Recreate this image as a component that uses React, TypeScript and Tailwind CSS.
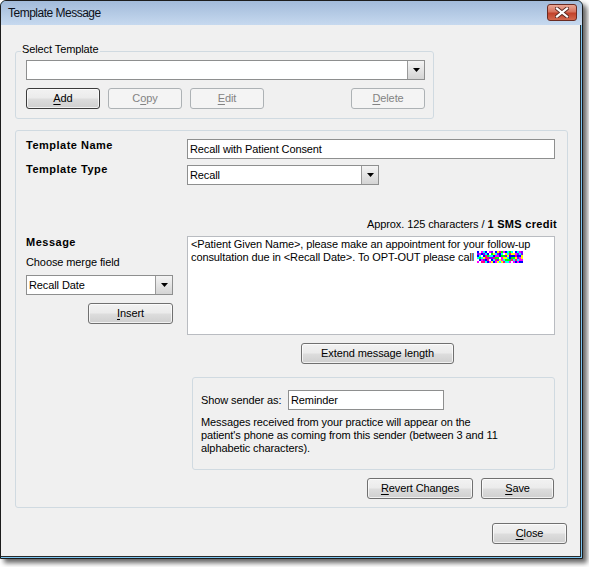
import type { ReactNode } from 'react';

const ui = "font-['Liberation_Sans',Arial,sans-serif] text-[11px] tracking-[-0.1px] text-black";

// pixel noise covering the practice phone number
function NumberMask() {
    const colors = ['#ff00ff', '#00ffff', '#ffff00', '#0000ff', '#ffffff', '#00ff00', '#ff0080', '#8000ff'];
    let seed = 7;
    const rand = () => {
        seed = (seed * 9301 + 49297) % 233280;
        return seed / 233280;
    };
    const cells: ReactNode[] = [];
    for (let y = 0; y < 6; y++) {
        for (let x = 0; x < 23; x++) {
            cells.push(
                <rect key={`${x}-${y}`} x={x * 2} y={y * 2} width={2} height={2} fill={colors[Math.floor(rand() * colors.length)]} />
            );
        }
    }
    return (
        <svg width="46" height="12" viewBox="0 0 46 12" className="inline-block align-[-2px]">
            {cells}
        </svg>
    );
}

function DropArrow() {
    return (
        <div className="w-[17px] h-full border-l border-[#9a9a9a] bg-gradient-to-b from-[#f4f4f4] to-[#d4d4d4] flex items-center justify-center">
            <svg width="7" height="4" viewBox="0 0 7 4">
                <path d="M0 0h7L3.5 4z" fill="#000" />
            </svg>
        </div>
    );
}

function Combo({ width, value }: { width: string; value?: string }) {
    return (
        <div className={`${width} h-[20px] border border-[#8e8f8f] bg-white flex items-stretch`}>
            <div className="flex-1 pl-[2px] leading-[18px] whitespace-nowrap overflow-hidden">{value}</div>
            <DropArrow />
        </div>
    );
}

function Btn({ children, width, disabled, primary }: { children: ReactNode; width: string; disabled?: boolean; primary?: boolean }) {
    if (disabled) {
        return (
            <div className={`${width} h-[21px] rounded-[3px] border border-[#adb2b5] bg-[#f4f4f4] text-[#838383] flex items-center justify-center`}>
                {children}
            </div>
        );
    }
    return (
        <div
            className={`${width} h-[21px] rounded-[3px] border ${primary ? 'border-[#3c3c3c]' : 'border-[#707070]'} bg-[linear-gradient(#f2f2f2_0%,#ebebeb_48%,#dddddd_52%,#cfcfcf_100%)] shadow-[inset_0_0_0_1px_rgba(255,255,255,0.7)] flex items-center justify-center`}
        >
            {children}
        </div>
    );
}

const U = ({ c }: { c: string }) => <span className="underline underline-offset-[2px]">{c}</span>;

export default function App() {
    return (
        <div className={`w-[589px] h-[567px] bg-white ${ui}`}>
            <div className="w-[583px] h-[559px] border border-[#1c1c1c] rounded-t-[6px] bg-[#7cc6f2] pr-[1px] pb-[1px] flex flex-col shadow-[4px_4px_5px_rgba(0,0,0,0.6)] overflow-hidden">
                {/* title bar */}
                <div className="h-[24px] -mr-[1px] bg-gradient-to-b from-[#a2bbda] to-[#c6d9ef] flex items-center pl-[7px] pr-[5px] rounded-t-[5px]">
                    <span className="text-[12px] tracking-[-0.5px] text-[#0c1018]">Template Message</span>
                    <div className="ml-auto mt-[-2px] w-[30px] h-[17px] rounded-[3px] border border-[#6a2b22] bg-[linear-gradient(#eaa795_0%,#d6735f_45%,#c2422b_55%,#d2684e_100%)] flex items-center justify-center">
                        <svg width="14" height="11" viewBox="0 0 14 11">
                            <path d="M2 1.5 12 9.5M12 1.5 2 9.5" stroke="#5a2a22" strokeWidth="4" strokeLinecap="square" />
                            <path d="M2 1.5 12 9.5M12 1.5 2 9.5" stroke="#ffffff" strokeWidth="2.2" strokeLinecap="square" />
                        </svg>
                    </div>
                </div>

                {/* dialog body */}
                <div className="flex-1 bg-[#f0f0f0] border-r border-b border-[#2a2a2a] flex flex-col pl-[14px]">
                    {/* Select Template group */}
                    <div className="relative mt-[26px] w-[419px] h-[68px] border border-[#d0dae1] rounded-[3px] pl-[10px] pt-[8px]">
                        <span className="absolute left-[5px] -top-[9px] px-[1px] bg-[#f0f0f0] leading-[13px]">Select Template</span>
                        <Combo width="w-[399px]" />
                        <div className="mt-[8px] flex gap-[8px] w-[399px]">
                            <Btn width="w-[74px]" primary>
                                <U c="A" />dd
                            </Btn>
                            <Btn width="w-[74px]" disabled>
                                C<U c="o" />py
                            </Btn>
                            <Btn width="w-[74px]" disabled>
                                <U c="E" />dit
                            </Btn>
                            <div className="ml-auto">
                                <Btn width="w-[74px]" disabled>
                                    <U c="D" />elete
                                </Btn>
                            </div>
                        </div>
                    </div>

                    {/* Template details group */}
                    <div className="mt-[11px] w-[553px] h-[378px] border border-[#d0dae1] rounded-[3px] pl-[10px] pt-[8px] flex flex-col">
                        <div className="flex">
                            <div className="w-[161px] font-bold tracking-[0.5px] leading-[13px]">Template Name</div>
                            <div className="w-[368px] h-[20px] border border-[#8e8f8f] bg-white pl-[2px] leading-[18px]">Recall with Patient Consent</div>
                        </div>
                        <div className="flex mt-[6px]">
                            <div className="w-[161px] font-bold tracking-[0.5px] leading-[13px] -mt-[2px]">Template Type</div>
                            <Combo width="w-[192px]" value="Recall" />
                        </div>

                        <div className="mt-[33px] w-[531px] text-right leading-[13px]">
                            Approx. 125 characters / <span className="font-bold tracking-[0.3px]">1 SMS credit</span>
                        </div>

                        <div className="flex mt-[5px]">
                            <div className="w-[161px] flex flex-col">
                                <div className="font-bold tracking-[0.5px] leading-[13px]">Message</div>
                                <div className="mt-[7px] leading-[13px]">Choose merge field</div>
                                <div className="mt-[6px]">
                                    <Combo width="w-[147px]" value="Recall Date" />
                                </div>
                                <div className="mt-[8px] w-[147px] flex justify-end">
                                    <Btn width="w-[85px]">
                                        <U c="I" />nsert
                                    </Btn>
                                </div>
                            </div>
                            <div className="w-[368px] h-[99px] border border-[#b9bcc1] bg-white px-[3px] pt-[1px] leading-[13px] whitespace-nowrap">
                                &lt;Patient Given Name&gt;, please make an appointment for your follow-up
                                <br />
                                consultation due in &lt;Recall Date&gt;. To OPT-OUT please call <NumberMask />
                            </div>
                        </div>

                        <div className="mt-[8px] ml-[275px]">
                            <Btn width="w-[153px]">Extend message length</Btn>
                        </div>

                        {/* sender group */}
                        <div className="mt-[13px] ml-[166px] w-[363px] h-[93px] border border-[#d0dae1] rounded-[3px] pl-[8px] pt-[12px]">
                            <div className="flex items-center">
                                <span className="w-[87px]">Show sender as:</span>
                                <div className="w-[156px] h-[20px] border border-[#8e8f8f] bg-white pl-[2px] leading-[18px]">Reminder</div>
                            </div>
                            <p className="mt-[6px] leading-[13px] w-[345px]">
                                Messages received from your practice will appear on the
                                <br />
                                patient's phone as coming from this sender (between 3 and 11
                                <br />
                                alphabetic characters).
                            </p>
                        </div>

                        <div className="mt-[8px] w-[528px] flex justify-end gap-[8px]">
                            <Btn width="w-[106px]">
                                <U c="R" />evert Changes
                            </Btn>
                            <Btn width="w-[73px]">
                                <U c="S" />ave
                            </Btn>
                        </div>
                    </div>

                    <div className="mt-[15px] ml-[477px]">
                        <Btn width="w-[75px]">
                            <U c="C" />lose
                        </Btn>
                    </div>
                </div>
            </div>
        </div>
    );
}
